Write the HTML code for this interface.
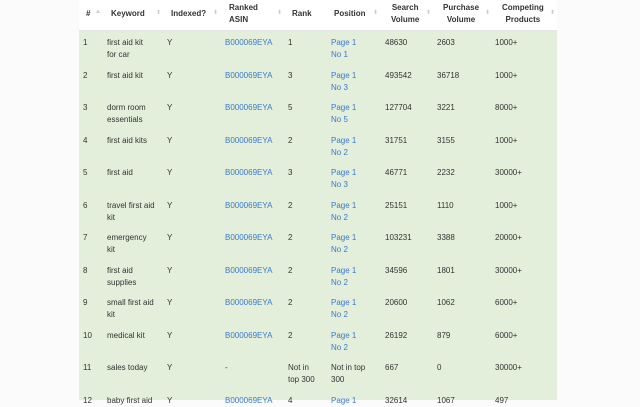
<!DOCTYPE html>
<html><head><style>
html,body{margin:0;padding:0;width:640px;height:400px;overflow:hidden;background:#fbfbfb;font-family:"Liberation Sans",sans-serif;font-size:8px;color:#333;}
.tbl{position:absolute;left:79px;top:0;width:478px;height:400px;background:#e3eedb;}
.hd{position:absolute;left:79px;top:0;width:478px;height:30px;background:#fff;border-bottom:1px solid #e6e6e6;}
.c{position:absolute;line-height:12px;white-space:nowrap;}
.h{font-weight:bold;color:#333;text-align:center;}
a{color:#3a7bc8;text-decoration:none;}
.s{color:#ccc;font-size:6px;position:absolute;}
</style></head><body>
<div class="tbl"></div>
<div class="hd"></div>
<div class="c h" style="left:86px;top:8px">#</div><span class="s" style="left:95px;top:9px">▲</span>
<div class="c h" style="left:111px;top:8px">Keyword</div><span class="s" style="left:156px;top:9px">⬍</span>
<div class="c h" style="left:171px;top:8px">Indexed?</div><span class="s" style="left:213px;top:9px">⬍</span>
<div class="c h" style="left:229px;top:2px;text-align:left">Ranked<br>ASIN</div><span class="s" style="left:277px;top:9px">⬍</span>
<div class="c h" style="left:292px;top:8px">Rank</div>
<div class="c h" style="left:334px;top:8px">Position</div><span class="s" style="left:373px;top:9px">⬍</span>
<div class="c h" style="left:391px;top:2px">Search<br>Volume</div><span class="s" style="left:426px;top:9px">⬍</span>
<div class="c h" style="left:443px;top:2px">Purchase<br>Volume</div><span class="s" style="left:485px;top:9px">⬍</span>
<div class="c h" style="left:502px;top:2px">Competing<br>Products</div><span class="s" style="left:550px;top:9px">⬍</span>

<div class="c" style="left:83px;top:37px">1</div><div class="c" style="left:107px;top:37px">first aid kit<br>for car</div><div class="c" style="left:167px;top:37px">Y</div><div class="c" style="left:225px;top:37px"><a>B000069EYA</a></div><div class="c" style="left:288px;top:37px">1</div><div class="c" style="left:331px;top:37px"><a>Page 1<br>No 1</a></div><div class="c" style="left:385px;top:37px">48630</div><div class="c" style="left:437px;top:37px">2603</div><div class="c" style="left:495px;top:37px">1000+</div>

<div class="c" style="left:83px;top:69.5px">2</div><div class="c" style="left:107px;top:69.5px">first aid kit</div><div class="c" style="left:167px;top:69.5px">Y</div><div class="c" style="left:225px;top:69.5px"><a>B000069EYA</a></div><div class="c" style="left:288px;top:69.5px">3</div><div class="c" style="left:331px;top:69.5px"><a>Page 1<br>No 3</a></div><div class="c" style="left:385px;top:69.5px">493542</div><div class="c" style="left:437px;top:69.5px">36718</div><div class="c" style="left:495px;top:69.5px">1000+</div>

<div class="c" style="left:83px;top:102px">3</div><div class="c" style="left:107px;top:102px">dorm room<br>essentials</div><div class="c" style="left:167px;top:102px">Y</div><div class="c" style="left:225px;top:102px"><a>B000069EYA</a></div><div class="c" style="left:288px;top:102px">5</div><div class="c" style="left:331px;top:102px"><a>Page 1<br>No 5</a></div><div class="c" style="left:385px;top:102px">127704</div><div class="c" style="left:437px;top:102px">3221</div><div class="c" style="left:495px;top:102px">8000+</div>

<div class="c" style="left:83px;top:134.5px">4</div><div class="c" style="left:107px;top:134.5px">first aid kits</div><div class="c" style="left:167px;top:134.5px">Y</div><div class="c" style="left:225px;top:134.5px"><a>B000069EYA</a></div><div class="c" style="left:288px;top:134.5px">2</div><div class="c" style="left:331px;top:134.5px"><a>Page 1<br>No 2</a></div><div class="c" style="left:385px;top:134.5px">31751</div><div class="c" style="left:437px;top:134.5px">3155</div><div class="c" style="left:495px;top:134.5px">1000+</div>

<div class="c" style="left:83px;top:167px">5</div><div class="c" style="left:107px;top:167px">first aid</div><div class="c" style="left:167px;top:167px">Y</div><div class="c" style="left:225px;top:167px"><a>B000069EYA</a></div><div class="c" style="left:288px;top:167px">3</div><div class="c" style="left:331px;top:167px"><a>Page 1<br>No 3</a></div><div class="c" style="left:385px;top:167px">46771</div><div class="c" style="left:437px;top:167px">2232</div><div class="c" style="left:495px;top:167px">30000+</div>

<div class="c" style="left:83px;top:199.5px">6</div><div class="c" style="left:107px;top:199.5px">travel first aid<br>kit</div><div class="c" style="left:167px;top:199.5px">Y</div><div class="c" style="left:225px;top:199.5px"><a>B000069EYA</a></div><div class="c" style="left:288px;top:199.5px">2</div><div class="c" style="left:331px;top:199.5px"><a>Page 1<br>No 2</a></div><div class="c" style="left:385px;top:199.5px">25151</div><div class="c" style="left:437px;top:199.5px">1110</div><div class="c" style="left:495px;top:199.5px">1000+</div>

<div class="c" style="left:83px;top:232px">7</div><div class="c" style="left:107px;top:232px">emergency<br>kit</div><div class="c" style="left:167px;top:232px">Y</div><div class="c" style="left:225px;top:232px"><a>B000069EYA</a></div><div class="c" style="left:288px;top:232px">2</div><div class="c" style="left:331px;top:232px"><a>Page 1<br>No 2</a></div><div class="c" style="left:385px;top:232px">103231</div><div class="c" style="left:437px;top:232px">3388</div><div class="c" style="left:495px;top:232px">20000+</div>

<div class="c" style="left:83px;top:264.5px">8</div><div class="c" style="left:107px;top:264.5px">first aid<br>supplies</div><div class="c" style="left:167px;top:264.5px">Y</div><div class="c" style="left:225px;top:264.5px"><a>B000069EYA</a></div><div class="c" style="left:288px;top:264.5px">2</div><div class="c" style="left:331px;top:264.5px"><a>Page 1<br>No 2</a></div><div class="c" style="left:385px;top:264.5px">34596</div><div class="c" style="left:437px;top:264.5px">1801</div><div class="c" style="left:495px;top:264.5px">30000+</div>

<div class="c" style="left:83px;top:297px">9</div><div class="c" style="left:107px;top:297px">small first aid<br>kit</div><div class="c" style="left:167px;top:297px">Y</div><div class="c" style="left:225px;top:297px"><a>B000069EYA</a></div><div class="c" style="left:288px;top:297px">2</div><div class="c" style="left:331px;top:297px"><a>Page 1<br>No 2</a></div><div class="c" style="left:385px;top:297px">20600</div><div class="c" style="left:437px;top:297px">1062</div><div class="c" style="left:495px;top:297px">6000+</div>

<div class="c" style="left:83px;top:329.5px">10</div><div class="c" style="left:107px;top:329.5px">medical kit</div><div class="c" style="left:167px;top:329.5px">Y</div><div class="c" style="left:225px;top:329.5px"><a>B000069EYA</a></div><div class="c" style="left:288px;top:329.5px">2</div><div class="c" style="left:331px;top:329.5px"><a>Page 1<br>No 2</a></div><div class="c" style="left:385px;top:329.5px">26192</div><div class="c" style="left:437px;top:329.5px">879</div><div class="c" style="left:495px;top:329.5px">6000+</div>

<div class="c" style="left:83px;top:362px">11</div><div class="c" style="left:107px;top:362px">sales today</div><div class="c" style="left:167px;top:362px">Y</div><div class="c" style="left:225px;top:362px">-</div><div class="c" style="left:288px;top:362px">Not in<br>top 300</div><div class="c" style="left:331px;top:362px">Not in top<br>300</div><div class="c" style="left:385px;top:362px">667</div><div class="c" style="left:437px;top:362px">0</div><div class="c" style="left:495px;top:362px">30000+</div>

<div class="c" style="left:83px;top:394.5px">12</div><div class="c" style="left:107px;top:394.5px">baby first aid</div><div class="c" style="left:167px;top:394.5px">Y</div><div class="c" style="left:225px;top:394.5px"><a>B000069EYA</a></div><div class="c" style="left:288px;top:394.5px">4</div><div class="c" style="left:331px;top:394.5px"><a>Page 1</a></div><div class="c" style="left:385px;top:394.5px">32614</div><div class="c" style="left:437px;top:394.5px">1067</div><div class="c" style="left:495px;top:394.5px">497</div>
</body></html>
